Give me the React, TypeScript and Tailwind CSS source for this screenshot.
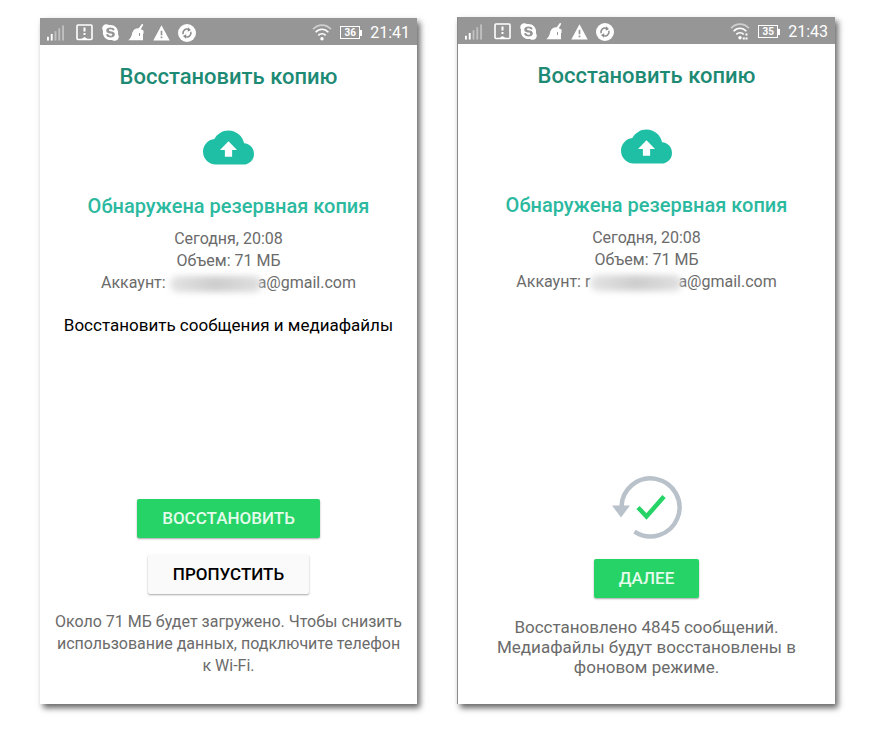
import React from 'react';
import { FaSkype } from 'react-icons/fa';

const SignalIcon = () => (
  <svg width="17" height="16" viewBox="0 0 18 16" fill="#fff" aria-hidden="true">
    <rect x="0" y="12" width="2" height="4" />
    <rect x="4" y="9" width="2" height="7" />
    <rect x="8" y="6" width="2" height="10" opacity=".4" />
    <rect x="12" y="3" width="2" height="13" opacity=".4" />
    <rect x="16" y="0" width="2" height="16" opacity=".4" />
  </svg>
);

const NoticeIcon = () => (
  <svg width="17" height="17" viewBox="0 0 17 17" fill="none" stroke="#fff" aria-hidden="true">
    <rect x="1" y="1" width="15" height="14.5" rx="1" strokeWidth="1.6" />
    <path d="M5.5 15h6l-3-2z" fill="#fff" stroke="none" />
    <path d="M8.5 3.5v4M8.5 9v2" strokeWidth="2" />
  </svg>
);

const CleanerIcon = () => (
  <svg width="17" height="17" viewBox="0 0 17 17" fill="#fff" aria-hidden="true">
    <path d="M10.8 4.3 13.6.3q1-.6 1.700.4l-2.500 4.600 2.700 1.200v3.600L4.400 8.400c1.300-3 3.300-4.300 6.400-4.100z" />
    <path d="M4.5 8 15 9v7.200H.3C2.600 14.400 3.700 11.900 4.500 8z" />
    <path d="M11.500 9v3" stroke="#969696" strokeWidth="1" />
  </svg>
);

const WarningIcon = () => (
  <svg width="17" height="16" viewBox="0 0 17 16" aria-hidden="true">
    <path d="M8.5.3 16.700 15.500H.3z" fill="#fff" />
    <path d="M8.500 5.800v4.400M8.500 11.400v1.900" stroke="#969696" strokeWidth="1.700" />
  </svg>
);

const SyncIcon = () => (
  <svg width="18" height="18" viewBox="0 0 18 18" aria-hidden="true">
    <circle cx="9" cy="9" r="9" fill="#fff" />
    <g fill="none" stroke="#8c8c8c" strokeWidth="1.500">
      <path d="M5.200 10.200A3.900 3.900 0 0 1 10.400 5.400" />
      <path d="M12.800 7.800A3.900 3.900 0 0 1 7.600 12.600" />
    </g>
    <path d="M10 3.200 13 5.900 9.700 7.800zM8 14.800 5 12.100 8.300 10.200z" fill="#8c8c8c" />
  </svg>
);

const WifiIcon = ({ busy }: { busy?: boolean }) => (
  <svg width="20" height="17" viewBox="0 0 20 17" fill="none" stroke="#fff" strokeWidth="1.600" aria-hidden="true">
    <path d="M1 5.200C6-.3 14-.3 19 5.200" opacity=".55" />
    <path d="M3.600 8.300c3.700-4 9.100-4 12.800 0" />
    <path d="M6.300 11.400c2.200-2.300 5.200-2.300 7.400 0" />
    <circle cx="10" cy="14.800" r="1.700" fill="#fff" stroke="none" />
    {busy && <path d="M16.500 10.500v2M16.500 14.500v2M13.800 14.500v2" strokeWidth="2" />}
  </svg>
);

const Battery = ({ level }: { level: number }) => (
  <span className="flex items-center">
    <span className="flex h-[13px] w-5 items-center justify-center border border-white text-[10px] leading-none font-bold">
      {level}
    </span>
    <span className="h-1.5 w-0.5 bg-white" />
  </span>
);

const StatusBar = ({ level, time, busy }: { level: number; time: string; busy?: boolean }) => (
  <div className="flex h-[27px] items-center justify-between bg-[#969696] px-[7px] pt-0.5 text-white">
    <div className="flex items-center gap-2">
      <SignalIcon />
      <span className="ml-1 flex">
        <NoticeIcon />
      </span>
      <FaSkype size={19} aria-hidden="true" />
      <CleanerIcon />
      <WarningIcon />
      <SyncIcon />
    </div>
    <div className="flex items-center gap-2">
      <WifiIcon busy={busy} />
      <Battery level={level} />
      <span className="text-base leading-5">{time}</span>
    </div>
  </div>
);

const CloudIcon = () => (
  <svg width="51" height="35" viewBox="0 4 24 16" className="mx-auto" aria-hidden="true">
    <path
      d="M19.350 10.040C18.670 6.590 15.640 4 12 4 9.110 4 6.600 5.640 5.350 8.040 2.340 8.360 0 10.910 0 14c0 3.310 2.690 6 6 6h13c2.760 0 5-2.240 5-5 0-2.640-2.050-4.780-4.650-4.960z"
      fill="#1fbfa6"
    />
    <path d="M12 9.100 16 13.200H13.700V16.300H10.300V13.200H8z" fill="#fff" />
  </svg>
);

const RestoredIcon = () => (
  <svg width="70" height="64" viewBox="0 0 70 64" fill="none" aria-hidden="true">
    <path d="M9.500 33A29 29 0 1 1 22.500 56.600" stroke="#b9c2ca" strokeWidth="4.500" />
    <path d="M0 30.500h18L9 42.500z" fill="#b9c2ca" />
    <path d="M26 32.500l8.500 9L52 21.500" stroke="#25d366" strokeWidth="4.500" />
  </svg>
);

const HiddenName = () => (
  <span className="-mr-1 inline-block h-4 w-[92px] rounded-full bg-gradient-to-r from-[#e4e4e4] via-[#cdcdcd] to-[#e0e0e0] align-middle blur-[3px]" />
);

const buttonBase = 'h-[39px] rounded-xs px-[25px] text-[17px] font-medium shadow-[0_1px_2px_rgba(0,0,0,0.35)]';

type ScreenProps = {
  level: number;
  time: string;
  busy?: boolean;
  nameStart?: string;
  className?: string;
  children: React.ReactNode;
};

const Screen = ({ level, time, busy, nameStart, className = '', children }: ScreenProps) => (
  <section
    className={`flex min-w-0 flex-1 flex-col bg-white text-center shadow-[3px_4px_6px_rgba(0,0,0,0.6)] ${className}`}
  >
    <StatusBar level={level} time={time} busy={busy} />
    <h1 className="mt-[18px] text-[22px] leading-7 font-medium text-[#1d8a74]">Восстановить копию</h1>
    <div className="mt-[39px]">
      <CloudIcon />
    </div>
    <h2 className="mt-[27px] text-[20px] leading-7 font-medium text-[#2bb9a0]">Обнаружена резервная копия</h2>
    <div className="mt-2 text-base leading-[22px] text-[#6b6b6b]">
      <p>Сегодня, 20:08</p>
      <p>Объем: 71 МБ</p>
      <p className="whitespace-nowrap">
        Аккаунт: {nameStart}
        <HiddenName />
        a@gmail.com
      </p>
    </div>
    {children}
  </section>
);

const App: React.FC = () => (
  <main className="flex min-h-screen gap-10 bg-white pt-[17px] pr-[37px] pb-[27px] pl-10 font-['Roboto',sans-serif]">
    <Screen level={36} time="21:41" className="mt-px">
      <p className="mt-5 text-[17px] leading-[22px] text-black">Восстановить сообщения и медиафайлы</p>
      <div className="mt-auto flex flex-col items-center pb-[27px]">
        <button type="button" className={`${buttonBase} bg-[#25d366] text-[#e4fbec]`}>
          ВОССТАНОВИТЬ
        </button>
        <button type="button" className={`${buttonBase} mt-[17px] bg-[#fafafa] text-black`}>
          ПРОПУСТИТЬ
        </button>
        <p className="mt-[17px] px-3 text-base leading-[22px] text-[#6b6b6b]">
          Около 71 МБ будет загружено. Чтобы снизить использование данных, подключите телефон к Wi-Fi.
        </p>
      </div>
    </Screen>

    <Screen level={35} time="21:43" busy nameStart="r" className="border-l border-[#8a8a8a]">
      <div className="mt-auto flex flex-col items-center pb-[27px]">
        <RestoredIcon />
        <button type="button" className={`${buttonBase} mt-5 bg-[#25d366] text-[#e4fbec]`}>
          ДАЛЕЕ
        </button>
        <p className="mt-[19px] px-9 text-[17px] leading-5 text-[#6b6b6b]">
          Восстановлено 4845 сообщений. Медиафайлы будут восстановлены в фоновом режиме.
        </p>
      </div>
    </Screen>
  </main>
);

export default App;
